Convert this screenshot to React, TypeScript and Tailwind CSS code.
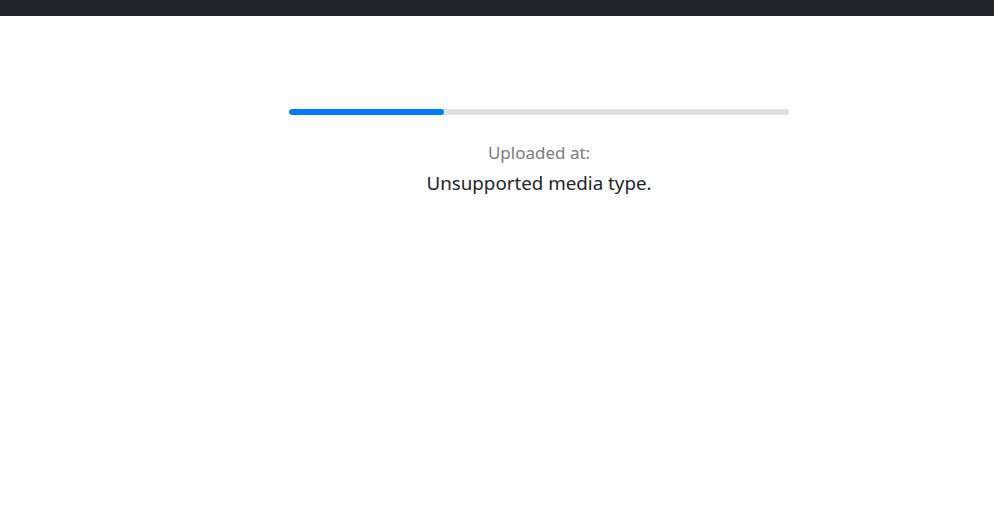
import React from 'react';

export default function App() {
  const progress = 31;
  return (
    <div className="min-h-[516px] bg-white" style={{ fontFamily: '"Noto Sans", "Open Sans", sans-serif' }}>
      <div className="h-4 bg-[#212529]" />
      <div className="ml-[289px] w-[500px] pt-[93px]">
        <div className="h-[6px] w-full rounded-full bg-[#e0e0e0] overflow-hidden">
          <div className="h-full rounded-full bg-[#007bff]" style={{ width: `${progress}%` }} />
        </div>
        <div className="mt-[26px] text-center text-[17px] leading-[24px] text-[#7b7b7b]">Uploaded at:</div>
        <div className="mt-[4px] text-center text-[18.75px] leading-[28px] text-[#212529]">Unsupported media type.</div>
      </div>
    </div>
  );
}
